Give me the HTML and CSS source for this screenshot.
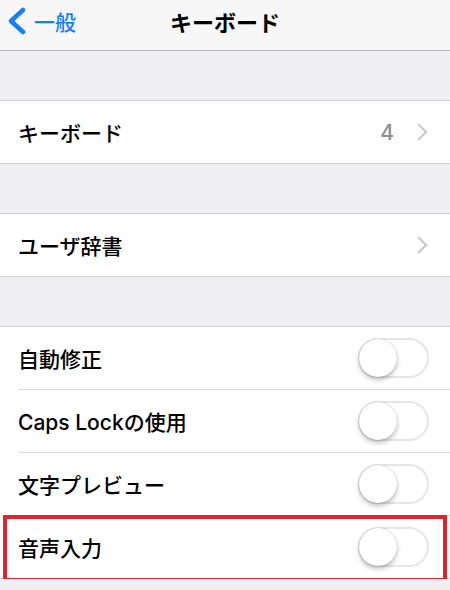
FILE: index.html
```html
<!DOCTYPE html>
<html lang="ja">
  <head>
    <meta charset="UTF-8" />
    <meta name="viewport" content="width=device-width, initial-scale=1.0" />
    <title>キーボード</title>
    <link rel="stylesheet" href="styles.css">
  </head>
  <body>
    <div class="navbar">
      <a class="back" href="#">
        <svg width="20" height="28" viewBox="0 0 20 28">
          <path d="M17 3 L5 14 L17 25" fill="none" stroke="#157efb" stroke-width="4.5" stroke-linecap="round" stroke-linejoin="round" />
        </svg>
        <span>一般</span>
      </a>
      <div class="title">キーボード</div>
    </div>

    <div class="group">
      <div class="row">
        <span class="label">キーボード</span>
        <span class="detail">4</span>
        <span class="chevron"></span>
      </div>
    </div>

    <div class="group">
      <div class="row">
        <span class="label">ユーザ辞書</span>
        <span class="chevron"></span>
      </div>
    </div>

    <div class="group">
      <div class="row">
        <span class="label">自動修正</span>
        <span class="switch"></span>
      </div>
      <div class="row">
        <span class="label">Caps Lockの使用</span>
        <span class="switch"></span>
      </div>
      <div class="row">
        <span class="label">文字プレビュー</span>
        <span class="switch"></span>
      </div>
      <div class="row highlight">
        <span class="label">音声入力</span>
        <span class="switch"></span>
      </div>
    </div>
  </body>
</html>
```

FILE: styles.css
```css
body {
  margin: 0;
  background-color: #efeff4; /* grouped table background */
  font-family: Inter, "Noto Sans CJK JP", sans-serif;
  color: #000;
}
.navbar {
  position: relative;
  height: 50px;
  background-color: #f7f7f8;
  border-bottom: 1px solid #b8b8bc;
  display: flex;
  align-items: center;
  justify-content: center;
}
.back {
  position: absolute;
  left: 6px;
  top: 6px;
  display: flex;
  align-items: center;
  gap: 8px;
  color: #157efb;
  text-decoration: none;
  font-size: 21px;
  font-weight: 500;
}
.title {
  font-size: 22px;
  font-weight: 700;
  margin-top: -8px;
}
.group {
  margin-top: 49px;
  background-color: #fff;
  border-top: 1px solid #d0d0d4;
  border-bottom: 1px solid #d0d0d4;
}
.row {
  position: relative;
  height: 62px;
  display: flex;
  align-items: center;
  padding: 0 21px 0 18px;
}
.row + .row::before {
  content: "";
  position: absolute;
  top: -1px;
  left: 18px;
  right: 0;
  border-top: 1px solid #d9d9dc;
}
.row + .row {
  margin-top: 1px;
}
.label {
  flex: 1;
  font-size: 21px;
  font-weight: 500;
}
.detail {
  font-size: 21px;
  font-weight: 500;
  color: #8e8e93;
  margin-right: 19px;
}
.chevron {
  width: 10px;
  height: 10px;
  border-top: 2px solid #c7c7cc;
  border-right: 2px solid #c7c7cc;
  transform: rotate(45deg);
  margin-right: 4px;
}
.switch {
  position: relative;
  width: 67px;
  height: 36px;
  border: 2px solid #e5e5ea;
  border-radius: 20px;
  background-color: #fff;
}
.switch::after {
  content: "";
  position: absolute;
  left: -1px;
  top: -1px;
  width: 38px;
  height: 38px;
  border-radius: 50%;
  background-color: #fff;
  box-shadow: 0 3px 5px rgba(0, 0, 0, 0.25), 0 0 1px rgba(0, 0, 0, 0.3);
}
.highlight::after {
  content: "";
  position: absolute;
  left: 3px;
  right: 3px;
  top: -1px;
  bottom: -4px;
  border: 4px solid #e3202b;
}
```
